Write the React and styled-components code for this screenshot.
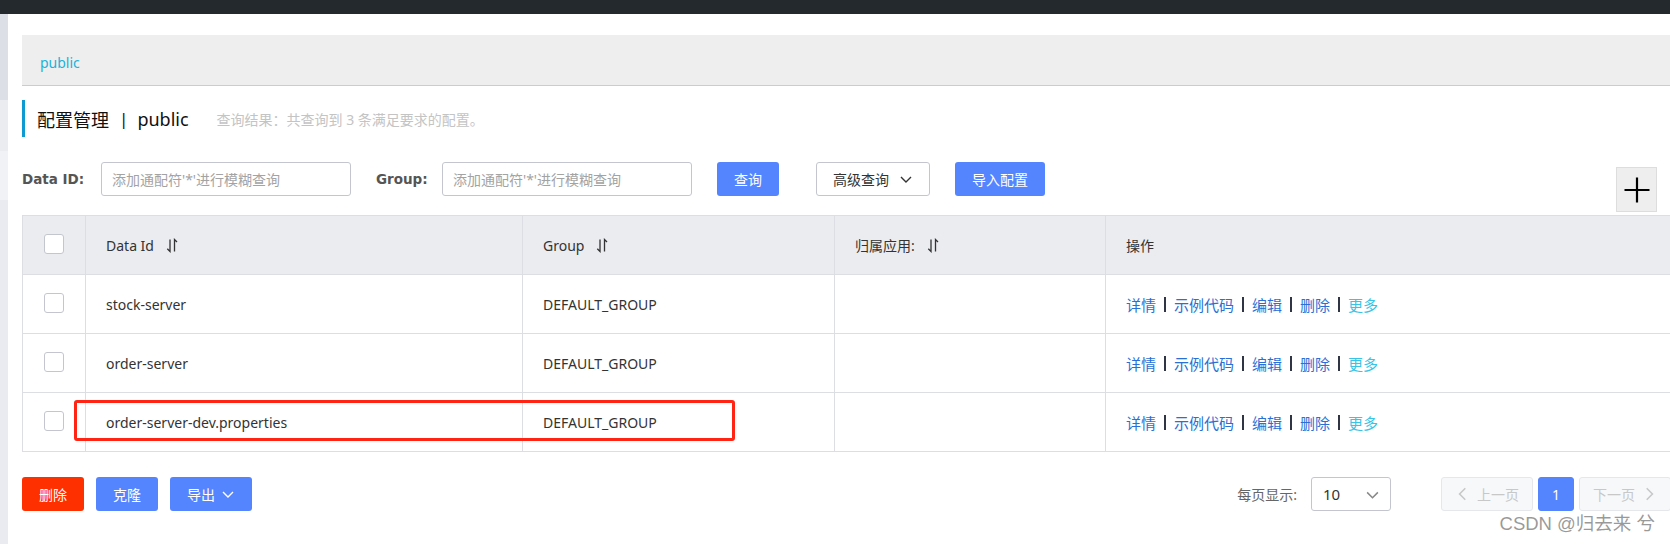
import React from "react";
import styled, { createGlobalStyle } from "styled-components";

const GlobalStyle = createGlobalStyle`
  html, body { margin: 0; padding: 0; background: #fff; overflow: hidden; }
  body { font-family: "Noto Sans", "Noto Sans CJK SC", sans-serif; font-size: 14px; color: #333; }
  * { box-sizing: border-box; }
`;

const Page = styled.div`
  position: relative;
  width: 1670px;
  height: 544px;
  overflow: hidden;
  display: flex;
  flex-direction: column;
`;

const TopBar = styled.div`
  height: 14px;
  background: #24292e;
  flex-shrink: 0;
`;

const Body = styled.div`
  flex: 1;
  display: flex;
  min-height: 0;
`;

const Sidebar = styled.div`
  width: 8px;
  display: flex;
  flex-direction: column;
  flex-shrink: 0;
`;

const SideSegment = styled.div`
  height: ${(p) => (p.$h ? `${p.$h}px` : "auto")};
  flex: ${(p) => (p.$h ? "none" : "1")};
  background: ${(p) => p.$c};
`;

const Main = styled.div`
  flex: 1;
  min-width: 0;
  padding-left: 14px;
  overflow: hidden;
`;

const Breadcrumb = styled.div`
  margin-top: 21px;
  height: 51px;
  background: #eeeeee;
  border-bottom: 1px solid #cccccc;
  display: flex;
  align-items: center;
  padding: 4px 0 0 18px;
  color: #20b2d8;
  font-size: 14px;
`;

const TitleRow = styled.div`
  margin-top: 14px;
  height: 37px;
  border-left: 3px solid #0d9ad3;
  padding-left: 12px;
  display: flex;
  align-items: center;
`;

const Title = styled.span`
  font-size: 18px;
  color: #111;
  display: flex;
  align-items: center;
`;

const TitleSep = styled.span`
  margin: 0 9px 0 10px;
  font-size: 17px;
`;

const Summary = styled.span`
  margin-left: 28px;
  color: #c4c4c4;
  font-size: 14px;
`;

const Toolbar = styled.div`
  margin-top: 25px;
  height: 50px;
  display: flex;
  align-items: flex-start;
  gap: 25px;
  padding-right: 13px;
`;

const Field = styled.div`
  display: flex;
  align-items: center;
  height: 34px;
`;

const Label = styled.label`
  width: ${(p) => p.$w}px;
  font-family: "DejaVu Sans", sans-serif;
  font-weight: bold;
  font-size: 13.5px;
  color: #555;
`;

const Input = styled.input`
  width: 250px;
  height: 34px;
  border: 1px solid #c4c6cf;
  border-radius: 3px;
  padding: 0 10px;
  font-family: "Noto Sans", "Noto Sans CJK SC", sans-serif;
  font-size: 14px;
  color: #333;
  outline: none;
  &::placeholder { color: #a3a3a3; }
`;

const Button = styled.button`
  height: 34px;
  padding: 0 16px;
  margin-left: ${(p) => p.$ml || 0}px;
  border-radius: 3px;
  border: 1px solid ${(p) => (p.$variant === "normal" ? "#c4c6cf" : "transparent")};
  background: ${(p) =>
    p.$variant === "danger" ? "#ff3000" : p.$variant === "normal" ? "#fff" : "#5584ff"};
  color: ${(p) => (p.$variant === "normal" ? "#333" : "#fff")};
  font-family: "Noto Sans", "Noto Sans CJK SC", sans-serif;
  font-size: 14px;
  display: inline-flex;
  align-items: center;
  justify-content: center;
  gap: ${(p) => p.$gap || 0}px;
  cursor: pointer;
  flex-shrink: 0;
`;

const PlusButton = styled.button`
  margin-left: auto;
  margin-top: 5px;
  width: 41px;
  height: 45px;
  background: #eeeeee;
  border: 1px solid #dddddd;
  display: flex;
  align-items: center;
  justify-content: center;
  padding: 0;
`;

const TableWrap = styled.div`
  position: relative;
  margin-top: 3px;
  width: calc(100% + 20px);
`;

const Grid = styled.div`
  display: grid;
  grid-template-columns: 63px 437px 312px 271px 1fr;
  border-top: 1px solid #dcdee3;
  border-left: 1px solid #dcdee3;
`;

const Cell = styled.div`
  height: 59px;
  border-right: 1px solid #dcdee3;
  border-bottom: 1px solid #dcdee3;
  background: ${(p) => (p.$head ? "#ebecf0" : "#fff")};
  display: flex;
  align-items: center;
  justify-content: ${(p) => (p.$center ? "center" : "flex-start")};
  padding-left: ${(p) => (p.$center ? 0 : 20)}px;
  color: #333;
  font-size: 14px;
  white-space: nowrap;
`;

const HeadText = styled.span`
  display: inline-flex;
  align-items: center;
  gap: 12px;
`;

const Checkbox = styled.span`
  width: 20px;
  height: 20px;
  border: 1px solid #c4c6cf;
  border-radius: 3px;
  background: #fff;
  margin-top: -2px;
`;

const Actions = styled.span`
  display: inline-flex;
  align-items: center;
`;

const Link = styled.a`
  color: ${(p) => (p.$light ? "#39c4e6" : "#2a6fd4")};
  text-decoration: none;
  font-size: 15px;
`;

const Pipe = styled.span`
  width: 2px;
  height: 15px;
  background: #2f3545;
  margin: 0 8px 0 8px;
`;

const Highlight = styled.div`
  position: absolute;
  left: 52px;
  top: 185px;
  width: 661px;
  height: 41px;
  border: 3px solid #ff2414;
  border-radius: 3px;
  pointer-events: none;
`;

const Footer = styled.div`
  margin-top: 25px;
  display: flex;
  align-items: center;
  justify-content: space-between;
  margin-right: -1px;
`;

const FooterLeft = styled.div`
  display: flex;
  gap: 12px;
`;

const Pager = styled.div`
  display: flex;
  align-items: center;
`;

const PagerLabel = styled.span`
  color: #666;
  font-size: 14px;
  margin-right: 14px;
`;

const Select = styled.div`
  width: 80px;
  height: 34px;
  border: 1px solid #c4c6cf;
  border-radius: 3px;
  display: flex;
  align-items: center;
  justify-content: space-between;
  padding: 0 10px 0 11px;
  font-size: 15px;
  color: #333;
  margin-right: 50px;
`;

const PageBtn = styled.button`
  height: 34px;
  width: ${(p) => p.$w}px;
  margin-left: ${(p) => p.$ml || 0}px;
  border-radius: 3px;
  border: 1px solid ${(p) => (p.$active ? "#5584ff" : "#e6e7eb")};
  background: ${(p) => (p.$active ? "#5584ff" : "#f7f8fa")};
  color: ${(p) => (p.$active ? "#fff" : "#c8c8c8")};
  font-family: "Noto Sans", "Noto Sans CJK SC", sans-serif;
  font-size: 14px;
  display: inline-flex;
  align-items: center;
  justify-content: center;
  gap: 6px;
  padding: 0;
`;

const Watermark = styled.div`
  position: absolute;
  right: 15px;
  top: 511px;
  font-family: "Liberation Sans", "Noto Sans CJK SC", sans-serif;
  font-size: 18.5px;
  line-height: 26px;
  color: rgba(120, 120, 120, 0.75);
  white-space: nowrap;
`;

const SortIcon = () => (
  <svg width="12" height="15" viewBox="0 0 12 15" fill="none" stroke="#333" strokeWidth="1.3">
    <path d="M4 1.5 V13.5 L1.3 10.8" />
    <path d="M8.5 13.5 V1.5 L11 4" />
  </svg>
);

const Chevron = ({ dir = "down", color = "#333", size = 14 }) => {
  const d =
    dir === "down"
      ? "M2 5 L7 10 L12 5"
      : dir === "left"
      ? "M9 2 L4 7 L9 12"
      : "M5 2 L10 7 L5 12";
  return (
    <svg width={size} height={size} viewBox="0 0 14 14" fill="none" stroke={color} strokeWidth="1.4">
      <path d={d} />
    </svg>
  );
};

const PlusIcon = () => (
  <svg width="26" height="26" viewBox="0 0 26 26" stroke="#000" strokeWidth="2.2">
    <path d="M13 0.5 V25.5 M0.5 13 H25.5" />
  </svg>
);

const rows = [
  { id: "stock-server", group: "DEFAULT_GROUP" },
  { id: "order-server", group: "DEFAULT_GROUP" },
  { id: "order-server-dev.properties", group: "DEFAULT_GROUP" },
];

export default function App() {
  return (
    <>
      <GlobalStyle />
      <Page>
        <TopBar />
        <Body>
          <Sidebar>
            <SideSegment $h={86} $c="#dcdfe5" />
            <SideSegment $h={51} $c="#eaecf0" />
            <SideSegment $h={49} $c="#f1f2f5" />
            <SideSegment $c="#e9ebf0" />
          </Sidebar>
          <Main>
            <Breadcrumb>public</Breadcrumb>
            <TitleRow>
              <Title>
                配置管理<TitleSep>|</TitleSep>public
              </Title>
              <Summary>查询结果：共查询到 3 条满足要求的配置。</Summary>
            </TitleRow>
            <Toolbar>
              <Field>
                <Label $w={79}>Data ID:</Label>
                <Input placeholder="添加通配符'*'进行模糊查询" />
              </Field>
              <Field>
                <Label $w={66}>Group:</Label>
                <Input placeholder="添加通配符'*'进行模糊查询" />
              </Field>
              <Button>查询</Button>
              <Button $variant="normal" $ml={12} $gap={10}>
                高级查询
                <Chevron color="#333" />
              </Button>
              <Button>导入配置</Button>
              <PlusButton>
                <PlusIcon />
              </PlusButton>
            </Toolbar>
            <TableWrap>
              <Grid>
                <Cell $head $center>
                  <Checkbox />
                </Cell>
                <Cell $head>
                  <HeadText>
                    Data Id <SortIcon />
                  </HeadText>
                </Cell>
                <Cell $head>
                  <HeadText>
                    Group <SortIcon />
                  </HeadText>
                </Cell>
                <Cell $head>
                  <HeadText>
                    归属应用: <SortIcon />
                  </HeadText>
                </Cell>
                <Cell $head>操作</Cell>
                {rows.map((r) => (
                  <React.Fragment key={r.id}>
                    <Cell $center>
                      <Checkbox />
                    </Cell>
                    <Cell>{r.id}</Cell>
                    <Cell>{r.group}</Cell>
                    <Cell />
                    <Cell>
                      <Actions>
                        <Link>详情</Link>
                        <Pipe />
                        <Link>示例代码</Link>
                        <Pipe />
                        <Link>编辑</Link>
                        <Pipe />
                        <Link>删除</Link>
                        <Pipe />
                        <Link $light>更多</Link>
                      </Actions>
                    </Cell>
                  </React.Fragment>
                ))}
              </Grid>
              <Highlight />
            </TableWrap>
            <Footer>
              <FooterLeft>
                <Button $variant="danger">删除</Button>
                <Button>克隆</Button>
                <Button $gap={6}>
                  导出
                  <Chevron color="#fff" />
                </Button>
              </FooterLeft>
              <Pager>
                <PagerLabel>每页显示:</PagerLabel>
                <Select>
                  10
                  <Chevron color="#888" size={15} />
                </Select>
                <PageBtn $w={92}>
                  <Chevron dir="left" color="#c8c8c8" size={16} />
                  上一页
                </PageBtn>
                <PageBtn $w={36} $ml={5} $active>
                  1
                </PageBtn>
                <PageBtn $w={92} $ml={5}>
                  下一页
                  <Chevron dir="right" color="#c8c8c8" size={16} />
                </PageBtn>
              </Pager>
            </Footer>
          </Main>
        </Body>
        <Watermark>CSDN @归去来 兮</Watermark>
      </Page>
    </>
  );
}
